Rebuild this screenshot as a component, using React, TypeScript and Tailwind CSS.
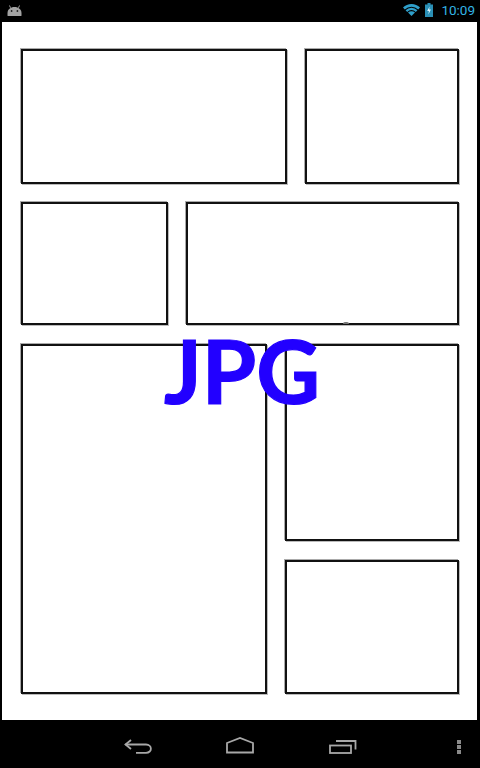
import React from "react";

const box = "border-2 border-[#111] bg-white box-border shadow-[-1px_-1px_0_0_#aaa,1px_1px_0_0_#bbb]";

export default function App() {
  return (
    <div className="relative w-[480px] h-[768px] bg-black flex flex-col overflow-hidden" style={{ fontFamily: '"Open Sans", sans-serif' }}>
      {/* status bar */}
      <div className="h-[22px] flex items-center pl-[7px] pr-[5px]">
        <svg width="15" height="11" viewBox="0 0 15 11" className="mt-[-2px]">
          <path d="M0.5 10.5V8C0.5 4.5 3.5 2 7.5 2S14.5 4.5 14.5 8V10.5C14.5 11 14 11 13.5 11H1.5C1 11 0.5 11 0.5 10.5Z" fill="#a3a3a3" />
          <path d="M3.5 2.8L2.5 0.5M11.5 2.8L12.5 0.5" stroke="#a3a3a3" strokeWidth="1" />
          <circle cx="4.6" cy="6" r="0.9" fill="#222" />
          <circle cx="10.4" cy="6" r="0.9" fill="#222" />
        </svg>
        <div className="flex-1" />
        <svg width="17" height="12" viewBox="0 0 17 12" className="mr-[5px] mt-[-3px]">
          <path d="M0 3.6A12 12 0 0 1 17 3.6L15.2 5.5A9.5 9.5 0 0 0 1.8 5.5Z" fill="#2f9fca" />
          <path d="M2.6 6.2A8.2 8.2 0 0 1 14.4 6.2L12.8 7.9A6 6 0 0 0 4.2 7.9Z" fill="#2f9fca" />
          <path d="M5 8.6A5 5 0 0 1 12 8.6L8.5 12Z" fill="#2f9fca" />
        </svg>
        <svg width="8" height="14" viewBox="0 0 8 14" className="mr-[8px] mt-[-3px]">
          <path d="M2.5 0H5.5V1.5H8V14H0V1.5H2.5Z" fill="#2a8fb5" />
          <path d="M4.6 3.5L2.2 8H3.9L3.4 11.5L5.9 6.5H4.2Z" fill="#dff6ff" />
        </svg>
        <span className="text-[13.5px] leading-none font-normal text-[#33b5e5] mt-[-1px]" style={{ fontFamily: "Roboto, sans-serif" }}>10:09</span>
      </div>

      {/* page */}
      <div className="relative ml-[2px] w-[475px] h-[698px] bg-white pl-[19px] pt-[27px] flex flex-col">
        <div className="flex gap-[18px] h-[135px]">
          <div className={`${box} w-[266px]`} />
          <div className={`${box} w-[154px]`} />
        </div>
        <div className="flex gap-[18px] h-[123px] mt-[18px]">
          <div className={`${box} w-[147px]`} />
          <div className={`${box} w-[273px]`} />
        </div>
        <div className="flex gap-[18px] mt-[19px]">
          <div className={`${box} w-[246px] h-[350px]`} />
          <div className="flex flex-col gap-[19px] w-[174px]">
            <div className={`${box} h-[197px]`} />
            <div className={`${box} h-[134px]`} />
          </div>
        </div>
        <div className="absolute left-[341px] top-[300px] w-[6px] h-[2px] rounded-t-full bg-[#777]" />
        <div className="absolute left-[162px] top-[288px] text-[88px] leading-[120px] font-bold text-[#2200ff] [-webkit-text-stroke:1.2px_#2200ff]" style={{ fontFamily: "Lato, sans-serif" }}>JPG</div>
      </div>

      {/* nav bar */}
      <div className="flex-1 flex items-start">
        <svg width="28" height="17" viewBox="0 0 28 17" className="ml-[124px] mt-[18px]" fill="none" stroke="#a8a8a8" strokeWidth="1.8">
          <path d="M7 2L1.5 6.5L7 11" />
          <path d="M1.5 6.5H22C28.5 6.5 28.5 14.8 22 14.8H12" />
        </svg>
        <svg width="28" height="17" viewBox="0 0 28 17" className="ml-[74px] mt-[17px]" fill="none" stroke="#a8a8a8" strokeWidth="1.8">
          <path d="M1 6L14 1L27 6V15.5H1Z" />
        </svg>
        <svg width="28" height="15" viewBox="0 0 28 15" className="ml-[75px] mt-[19px]" fill="none" stroke="#a8a8a8" strokeWidth="1.8">
          <rect x="1" y="6.5" width="21" height="7.5" />
          <path d="M7 2H26.5V10.5" />
        </svg>
        <div className="ml-[100px] mt-[20px] flex flex-col gap-[1px]">
          <div className="w-[4px] h-[4px] bg-[#8a8a8a]" />
          <div className="w-[4px] h-[4px] bg-[#8a8a8a]" />
          <div className="w-[4px] h-[4px] bg-[#8a8a8a]" />
        </div>
      </div>
    </div>
  );
}
